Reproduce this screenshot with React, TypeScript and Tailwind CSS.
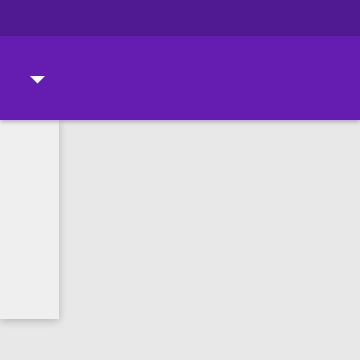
export default function App() {
  return (
    <div className="w-[360px] h-[360px] bg-[#e8e8e8] flex flex-col overflow-hidden">
      <div className="h-[36px] bg-[#501a93] shrink-0" />
      <div className="h-[84px] bg-[#641cb1] shrink-0 flex items-center pl-[30px] shadow-[0_2px_4px_rgba(0,0,0,0.25)] relative z-10">
        <svg width="15" height="8" viewBox="0 0 15 8" className="mt-[4px]">
          <path d="M0 0 L15 0 L7.5 7.5 Z" fill="#ffffff" />
        </svg>
      </div>
      <div className="w-[59px] h-[199px] bg-[#efefef] shadow-[0_2px_8px_rgba(0,0,0,0.22)]" />
    </div>
  );
}
